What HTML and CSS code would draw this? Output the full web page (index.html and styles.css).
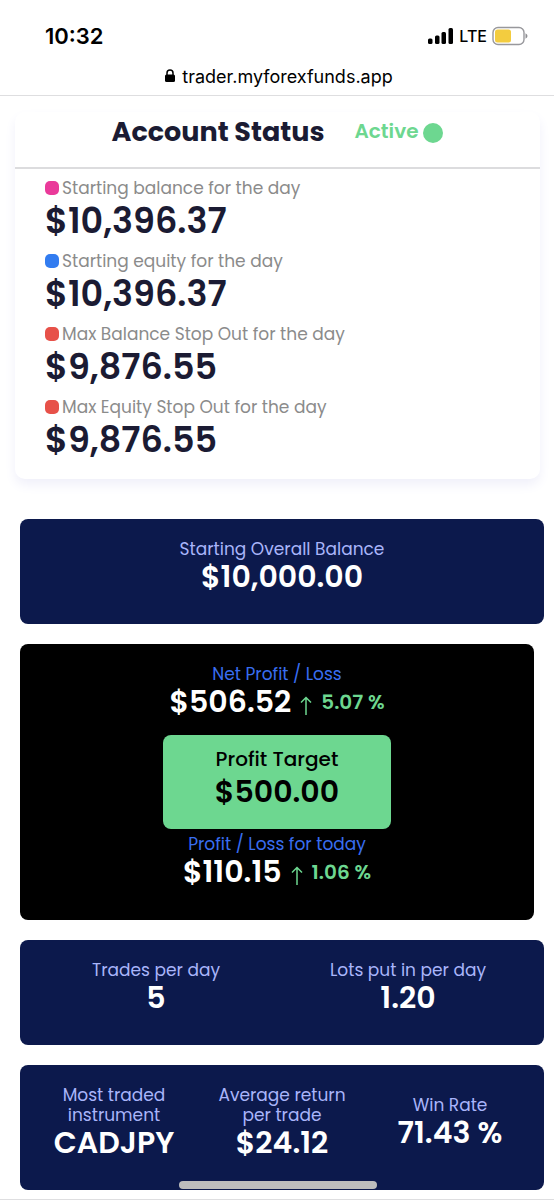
FILE: index.html
```html
<!DOCTYPE html>
<html lang="en">
<head>
<meta charset="utf-8">
<meta name="viewport" content="width=device-width, initial-scale=1">
<title>Account Status</title>
<link rel="stylesheet" href="styles.css">
</head>
<body>
<header class="browser">
  <div class="status-bar">
    <span class="time">10:32</span>
    <div class="signals">
      <svg width="26" height="18" viewBox="0 0 26 18" aria-hidden="true"><rect x="0" y="11.500" width="4.500" height="5.500" rx="1.500"/><rect x="7" y="8.500" width="4.500" height="8.500" rx="1.500"/><rect x="13.500" y="5" width="4.500" height="12" rx="1.500"/><rect x="20.500" y="1" width="4.500" height="16" rx="1.500"/></svg>
      <span class="network">LTE</span>
      <svg width="36" height="20" viewBox="0 0 36 20" aria-hidden="true"><rect x="1" y="1.5" width="31" height="17" rx="5" fill="#fff" stroke="#98989c" stroke-width="1.4"/><rect x="3" y="3.5" width="16" height="13" rx="2.5" fill="#f3cc3f"/><path d="M33.5 7.2q2 1 2 2.8t-2 2.8z" fill="#8e8e92"/></svg>
    </div>
  </div>
  <div class="address">
    <svg width="10" height="14" viewBox="0 0 10 14" aria-hidden="true"><rect x="0" y="5.5" width="10" height="7.5" rx="1.5"/><path d="M2 6.500V4a3 3 0 0 1 6 0v2.500" fill="none" stroke="#000" stroke-width="1.500"/></svg>
    <span>trader.myforexfunds.app</span>
  </div>
</header>
<main class="page">
  <section class="account">
    <div class="account-head">
      <h1 class="account-title">Account Status</h1>
      <div class="state">Active <span class="state-dot"></span></div>
    </div>
    <dl class="limits">
      <div><dt class="limit-label"><span class="swatch pink"></span>Starting balance for the day</dt><dd class="limit-value">$10,396.37</dd></div>
      <div><dt class="limit-label"><span class="swatch blue"></span>Starting equity for the day</dt><dd class="limit-value">$10,396.37</dd></div>
      <div><dt class="limit-label"><span class="swatch red"></span>Max Balance Stop Out for the day</dt><dd class="limit-value">$9,876.55</dd></div>
      <div><dt class="limit-label"><span class="swatch red"></span>Max Equity Stop Out for the day</dt><dd class="limit-value">$9,876.55</dd></div>
    </dl>
  </section>

  <div class="panels">
    <section class="panel">
      <div class="stat"><div class="label">Starting Overall Balance</div><div class="value">$10,000.00</div></div>
    </section>

    <section class="panel profit">
      <div class="label">Net Profit / Loss</div>
      <div class="result">
        <span class="value">$506.52</span>
        <svg class="arrow" width="12" height="20" viewBox="0 0 12 20" aria-hidden="true"><path d="M6 19V1.500M1 6.500l5-5 5 5"/></svg>
        <span class="change">5.07 %</span>
      </div>
      <div class="target"><div class="target-label">Profit Target</div><div class="target-value">$500.00</div></div>
      <div class="label">Profit / Loss for today</div>
      <div class="result">
        <span class="value">$110.15</span>
        <svg class="arrow" width="12" height="20" viewBox="0 0 12 20" aria-hidden="true"><path d="M6 19V1.500M1 6.500l5-5 5 5"/></svg>
        <span class="change">1.06 %</span>
      </div>
    </section>

    <section class="panel">
      <div class="stat"><div class="label">Trades per day</div><div class="value">5</div></div>
      <div class="stat"><div class="label">Lots put in per day</div><div class="value">1.20</div></div>
    </section>

    <section class="panel">
      <div class="stat"><div class="label">Most traded instrument</div><div class="value">CADJPY</div></div>
      <div class="stat"><div class="label">Average return per trade</div><div class="value">$24.12</div></div>
      <div class="stat"><div class="label">Win Rate</div><div class="value">71.43 %</div></div>
    </section>
  </div>
</main>
<div class="home-indicator"></div>
</body>
</html>
```
FILE: styles.css
```css
* { box-sizing: border-box; }
body {
  margin: 0;
  background: #fff;
  color: #1b1b33;
  font-family: Poppins, Inter, "Liberation Sans", sans-serif;
}

/* Browser chrome */
.browser {
  border-bottom: 1px solid #dedee0;
  color: #000;
  font-family: Inter, sans-serif;
}
.status-bar {
  display: flex;
  justify-content: space-between;
  align-items: center;
  padding: 20px 26px 0 45px;
  height: 52px;
}
.time { font-size: 22px; font-weight: 600; }
.signals { display: flex; align-items: center; gap: 5px; }
.network { font-size: 16px; font-weight: 500; }
.address {
  display: flex;
  justify-content: center;
  align-items: center;
  gap: 7px;
  height: 43px;
  padding: 5px 0 0 4px;
  font-size: 18px;
}

/* Account status card */
.page { padding-top: 16px; }
.account {
  margin: 0 14px 40px 15px;
  padding-bottom: 13px;
  border-radius: 10px;
  box-shadow: 0 6px 12px #f0f0fa;
}
.account-head {
  display: flex;
  justify-content: center;
  gap: 30px;
  height: 57px;
  border-bottom: 2px solid #dcdcde;
}
.account-title { margin: 0; font-size: 27px; font-weight: 700; line-height: 40px; }
.state {
  display: flex;
  align-items: center;
  gap: 5px;
  height: 38px;
  color: #6dd790;
  font-size: 20px;
  font-weight: 600;
}
.state-dot { width: 20px; height: 20px; margin-top: 4px; border-radius: 50%; background: #6dd790; }
.limits { margin: 0; padding: 5px 30px 0; }
.limit-label {
  display: flex;
  align-items: center;
  gap: 3px;
  color: #8b8b8b;
  font-size: 17px;
  line-height: 28px;
}
.limit-value { margin: -4px 0 0; padding-bottom: 4px; font-size: 35px; font-weight: 600; line-height: 45px; }
.swatch { width: 14px; height: 14px; border-radius: 5px; }
.pink { background: #ea3a9a; }
.blue { background: #327cf0; }
.red { background: #e75149; }

/* Stat panels */
.panels {
  display: flex;
  flex-direction: column;
  gap: 20px;
  padding: 0 10px 9px 20px;
  border-bottom: 1px solid #dedee0;
}
.panel {
  display: flex;
  align-items: center;
  padding: 20px 10px 29px;
  border-radius: 8px;
  background: #0c194c;
  text-align: center;
}
.stat { flex: 1; padding: 0 15px; }
.label { color: #a9b5fa; font-size: 17px; line-height: 20px; }
.value { color: #fff; font-size: 30px; font-weight: 600; line-height: 36px; }
.profit {
  flex-direction: column;
  margin-right: 10px;
  padding-bottom: 30px;
  background: #000;
}
.profit .label { color: #396ef0; }
.result { display: flex; align-items: center; gap: 9px; }
.arrow { margin-top: 8px; fill: none; stroke: #6dd790; stroke-width: 1.5; }
.change { color: #6dd790; font-size: 20px; font-weight: 600; }
.target {
  min-width: 228px;
  margin: 15px 0 5px;
  padding: 12px 20px 16px;
  border-radius: 8px;
  background: #6dd790;
  color: #000;
}
.target-label { font-size: 20px; font-weight: 500; line-height: 24px; }
.target-value { font-size: 30px; font-weight: 600; line-height: 42px; }
.home-indicator {
  position: fixed;
  bottom: 11px;
  left: 50%;
  width: 198px;
  height: 8px;
  margin-left: -98px;
  border-radius: 4px;
  background: #bdbdbd;
}
```
